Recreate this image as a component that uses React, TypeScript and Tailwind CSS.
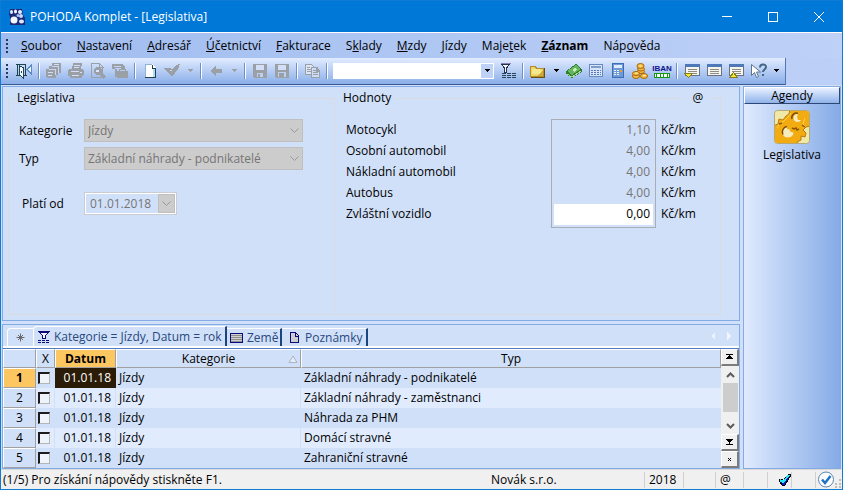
import React, { useState } from "react";

type IconProps = { children: React.ReactNode; w?: number; h?: number };

function Pic({ children, w = 16, h = 16 }: IconProps) {
  return (
    <svg width={w} height={h} viewBox={`0 0 ${w} ${h}`} shapeRendering="crispEdges" aria-hidden="true" className="shrink-0">
      {children}
    </svg>
  );
}

const GRAY = "#9b9fa6";

const DoorIcon = () => (
  <Pic>
    <path d="M0 1.500h10M1.500 1v12M9.500 1v12M0 12.500h4M8 12.500h3" fill="none" stroke="#1d4450" />
    <path d="M3 2.500l4 2v10l-4-3z" fill="#f4faff" stroke="#1d4450" />
    <path d="M5 8h1v2H5z" fill="#1d4450" />
    <path d="M11 6.500l4-4v8z" fill="#e8f4ff" stroke="#5b8cc4" />
  </Pic>
);
const PagesIcon = () => (
  <Pic>
    <path d="M6 0h9v10h-3v2h-2v3H1l-1-1V6h3V3h3z" fill={GRAY} />
    <path d="M3 6.500h6.500V12M6 3.500h6.500V10" fill="none" stroke="#c8d8f4" />
    <path d="M2 9.500h5M2 12.500h4M8 1.500h5" stroke="#d4e0f8" />
  </Pic>
);
const PrintIcon = () => (
  <Pic>
    <path d="M5 0h9l-1 6H4zM1 6h13l2 2v4l-2 1v2H2v-2H0V8z" fill={GRAY} />
    <path d="M6 2.500h6M6 4.500h5M3 8.500h8M4 12.500h7" stroke="#d4e0f8" />
    <path d="M12 9h2v1h-2z" fill="#d4e0f8" />
  </Pic>
);
const PreviewIcon = () => (
  <Pic>
    <path d="M1.500.500h8l3 3V14.500h-11z" fill="none" stroke={GRAY} />
    <path d="M9.500 1v3h4" fill="none" stroke={GRAY} />
    <circle cx="8" cy="8" r="4" fill={GRAY} />
    <path d="M10 10l5 5" stroke={GRAY} strokeWidth="3" />
    <path d="M6 7h3v2H6z" fill="#dbe6fa" />
  </Pic>
);
const PrintBoxIcon = () => (
  <Pic>
    <path d="M0 1h11l2 3v3H9V5H3v1H0z" fill={GRAY} />
    <path d="M3 6h2v8H3z" fill={GRAY} />
    <path d="M5 8h11v7H5z" fill={GRAY} />
    <path d="M7 8V6.500h6V8" fill="none" stroke={GRAY} />
    <path d="M2 3.500h7" fill="none" stroke="#c4d4f2" />
  </Pic>
);
const NewIcon = () => (
  <Pic>
    <path d="M3 1h7l4 4v10H3z" fill="#fff" />
    <path d="M3 1.500h7M3.500 1v13" stroke="#8fb2d9" fill="none" />
    <path d="M10 2v3h3.500v9.500H3" stroke="#1d4450" fill="none" />
    <path d="M11 6h2v8h-2z" fill="#b4dcf0" />
  </Pic>
);
const StampIcon = () => (
  <Pic>
    <path d="M0 5h6l2 1 4-4 4-1-2 5-6 8z" fill={GRAY} />
    <path d="M6 7.500h2" stroke="#c8d8f4" />
  </Pic>
);
const BackIcon = () => (
  <Pic>
    <path d="M2 8l6-5v3h6v4H8v3z" fill={GRAY} />
  </Pic>
);
const DiskIcon = () => (
  <Pic>
    <path d="M1 1h14v14H2l-1-1z" fill={GRAY} />
    <path d="M4 2h8v5H4z" fill="#d2dff7" />
    <path d="M5 10h6v4H5z" fill="#bcd0f2" />
    <path d="M6 11h2v3H6z" fill={GRAY} />
  </Pic>
);
const DiskOutIcon = () => (
  <Pic>
    <path d="M1 1h14v14H2l-1-1z" fill={GRAY} />
    <path d="M4 2h8v5H4z" fill="#d2dff7" />
    <path d="M4 9h8v5H4z" fill="#bcd0f2" />
    <path d="M5 10h5v5H5z" fill={GRAY} />
  </Pic>
);
const CopyIcon = () => (
  <Pic>
    <path d="M1.500 1.500h6l2 2v8h-8z" fill="#dbe5f7" stroke={GRAY} />
    <path d="M3 4.500h3M3 6.500h5M3 8.500h5" stroke={GRAY} />
    <path d="M7.500 4.500h5l3 3v7h-8z" fill="#cddcf5" stroke={GRAY} />
    <path d="M12 4h1v3h3v1h-4zM9 7.500h3M9 9.500h5M9 11.500h5" fill={GRAY} stroke={GRAY} />
  </Pic>
);
const FilterListIcon = () => (
  <Pic>
    <path d="M1.500 1.500h8L6.500 5v4h-2V5z" fill="#f4f8ff" stroke="#27324e" />
    <path d="M1 .5h10" stroke="#8a7fb5" />
    <path d="M2 10.500h14M2 12.500h14M2 14.500h14" stroke="#27445a" strokeDasharray="4 1" />
  </Pic>
);
const FolderIcon = () => (
  <Pic>
    <path d="M.5 3.500h5l1 2h7v8H.5z" fill="#ecd766" stroke="#b08e30" />
    <path d="M2 6h9v5H2z" fill="#f5e88c" />
    <path d="M14.500 5v9.500H1" fill="none" stroke="#6d4e12" />
    <path d="M7 13l6-6v6z" fill="#d0aa3c" />
  </Pic>
);
const MoneyIcon = () => (
  <Pic>
    <path d="M0 8l10-7 6 5v3L6 15l-6-4z" fill="#2e7d32" />
    <path d="M1 8l9-6 5 4-9 6z" fill="#67b55e" />
    <path d="M6 7l3-2 2 2-3 2z" fill="#c6efb8" />
    <path d="M1 11l5 3 9-6" fill="none" stroke="#a4dc98" />
  </Pic>
);
const CalcWideIcon = () => (
  <Pic>
    <rect x="1.500" y="1.500" width="13" height="12" fill="#d6e3f8" stroke="#6789bd" />
    <path d="M3 3h10v2H3z" fill="#7f9dcb" />
    <path d="M3 7.500h10M3 9.500h10M3 11.500h10" stroke="#5579b5" strokeDasharray="2 1" />
  </Pic>
);
const CalcIcon = () => (
  <Pic>
    <rect x="2.500" y=".5" width="11" height="14" fill="#6e9bd8" stroke="#3c6eb4" />
    <path d="M4 2h8v3H4z" fill="#e0ecfb" />
    <path d="M4 7.500h6M4 9.500h6M4 11.500h6" stroke="#f2f6fd" strokeDasharray="2 1" />
    <path d="M10 7.500h2" stroke="#f09a32" strokeWidth="2" />
  </Pic>
);
const CoinsIcon = () => (
  <svg width="16" height="16" viewBox="0 0 16 16" aria-hidden="true">
    <g fill="#f6bd42" stroke="#a86508">
      <ellipse cx="9" cy="8.500" rx="3.500" ry="2" />
      <ellipse cx="9" cy="6" rx="3.500" ry="2" />
      <ellipse cx="8.500" cy="3" rx="3.500" ry="2.500" />
      <ellipse cx="4" cy="13" rx="3.500" ry="2.500" />
      <ellipse cx="4" cy="10.500" rx="3.500" ry="2" />
      <ellipse cx="12" cy="13" rx="3.500" ry="2.500" />
    </g>
    <path d="M7 3h3M3 10h3M11 12.500h3" stroke="#fff0a8" />
  </svg>
);
const WindowIcon = ({ mark }: { mark?: "down" | "up" }) => (
  <Pic>
    <rect x="1.500" y="1.500" width="14" height="11" fill="#f5f5ee" stroke="#6a7282" />
    <path d="M1 1h15v3H1z" fill="#4f78b8" />
    <path d="M4 6.500h9M4 8.500h9M4 10.500h9" stroke="#8c8c84" />
    {mark === "down" && <path d="M.5 10.500h8l-4 4z" fill="#f5e632" stroke="#857d20" />}
    {mark === "up" && <path d="M1.500 14.500h8l-4-5z" fill="#f5e632" stroke="#857d20" />}
  </Pic>
);
const HelpIcon = () => (
  <svg width="17" height="16" viewBox="0 0 17 16" aria-hidden="true">
    <path d="M1.500 1.500v11l3-3 2 5 2-1-2-4.500h4z" fill="#fff" stroke="#5f7690" />
    <path d="M10 4.500c0-4 6-4 6-.5 0 2.500-3 2.500-3 5M13 11v2" fill="none" stroke="#456685" strokeWidth="2" />
  </svg>
);
const Caret = ({ color = "#000" }: { color?: string }) => (
  <Pic w={7} h={4}>
    <path d="M1 0h5v1H1zM2 1h3v1H2zM3 2h1v1H3z" fill={color} />
  </Pic>
);

const FunnelIcon = () => (
  <Pic w={12} h={12}>
    <path d="M1.500 1.500h9L7.500 4.500v3h-3v-3z" fill="#f4f8ff" stroke="#0b0b7c" />
    <path d="M0 .5h12" stroke="#0b0b7c" />
    <path d="M0 9.500h12M0 11.500h12" stroke="#0b0b7c" strokeDasharray="3 1" />
  </Pic>
);
const GridIcon = () => (
  <Pic w={13} h={10}>
    <rect x="0.500" y="0.500" width="12" height="9" fill="#d0d0d0" stroke="#0b0b7c" />
    <path d="M1 2.500h11M1 4.500h11M1 6.500h11M1 8.500h11" stroke="#8d8d8d" />
  </Pic>
);
const NoteIcon = () => (
  <Pic w={10} h={12}>
    <path d="M.5 .5h5l3 3v7h-8z" fill="#cfcfcf" stroke="#0b0b7c" />
    <path d="M5.500 1v3h3" fill="none" stroke="#0b0b7c" />
  </Pic>
);

function AppLogo() {
  return (
    <svg width="16" height="16" viewBox="0 0 16 16" aria-hidden="true">
      <path d="M1 0h12l1 6 2 3v7H1V9L0 5z" fill="#1c2a78" />
      <ellipse cx="2.500" cy="3" rx="1.500" ry="2" fill="#e4ecfb" />
      <ellipse cx="6.500" cy="2.500" rx="1.500" ry="2" fill="#f2f6ff" />
      <ellipse cx="11" cy="3" rx="2" ry="2" fill="#e4ecfb" />
      <ellipse cx="5" cy="11" rx="3.500" ry="3.500" fill="#f2f8ff" />
      <circle cx="12" cy="7" r="2" fill="#c9d9f8" />
      <circle cx="9" cy="6.500" r="1.500" fill="#a9c0f0" />
      <ellipse cx="12.500" cy="12.500" rx="2.500" ry="2" fill="#dce8fc" />
    </svg>
  );
}

function GearsPicture() {
  return (
    <svg width="36" height="34" viewBox="0 0 36 34" aria-hidden="true">
      <defs>
        <clipPath id="tile">
          <rect x="1" y="1" width="34" height="32" rx="2" />
        </clipPath>
      </defs>
      <rect x="0.500" y="0.500" width="35" height="33" rx="3" fill="#f0e8a8" stroke="#b5a878" />
      <g clipPath="url(#tile)">
        <path
          d="M16 -1l-1 5-3 2-3 4-4-1-1 5-5 2v20h25l-1-4 4-2v-4l4 1 1-4-3-3 3-3 4-1V-1z"
          fill="#f2ac12"
          stroke="#b87a0a"
          strokeLinejoin="round"
        />
        <path d="M17 3l-3 4-4 4-4 2-3 5M31 8l-2 6 3 3" fill="none" stroke="#ffcf4a" />
        <path d="M13 16.500a5.500 5.500 0 1 0 6.500 6l-3-.5-1-2.500-2.500-.5z" fill="#f4ecbc" />
        <path d="M9 24.500a5.500 5.500 0 0 1 4-8" fill="none" stroke="#7d4c04" strokeWidth="1.500" />
        <path d="M24 4a4 4 0 1 0 3 6l-3 0-1-3z" fill="#f4ecbc" />
        <path d="M18 9a4.500 4.500 0 0 1 6-5.500" fill="none" stroke="#7d4c04" strokeWidth="1.500" />
        <path d="M18 18l2 1 2-1 1 2 2-1M28 15l3 2M5 14l3-1" fill="none" stroke="#8b5706" strokeWidth="1.500" />
      </g>
    </svg>
  );
}

function Sep() {
  return (
    <span className="flex h-4 w-2 shrink-0 justify-center">
      <span className="w-px bg-[#6e8fc8]" />
      <span className="w-px bg-white" />
    </span>
  );
}

function Tool({ label, disabled, children }: { label: string; disabled?: boolean; children: React.ReactNode }) {
  return (
    <button type="button" aria-label={label} disabled={disabled} className="flex h-6 w-[22px] shrink-0 items-center justify-center">
      {children}
    </button>
  );
}

function Drop({ label, disabled }: { label: string; disabled?: boolean }) {
  return (
    <button type="button" aria-label={label} disabled={disabled} className="flex h-6 w-3.5 shrink-0 items-center justify-center">
      <Caret color={disabled ? GRAY : "#000"} />
    </button>
  );
}

function Grip() {
  return (
    <span className="flex w-3 shrink-0 flex-col items-center gap-0.5">
      {[0, 1, 2, 3].map((i) => (
        <span key={i} className="size-0.5 bg-[#26375c]" />
      ))}
    </span>
  );
}

const menu: [string, string, string][] = [
  ["", "S", "oubor"],
  ["", "N", "astavení"],
  ["", "A", "dresář"],
  ["", "Ú", "četnictví"],
  ["", "F", "akturace"],
  ["S", "k", "lady"],
  ["", "M", "zdy"],
  ["", "J", "ízdy"],
  ["Maje", "t", "ek"],
  ["", "Z", "áznam"],
  ["Náp", "o", "věda"],
];

function Toolbar() {
  return (
    <div className="flex">
      <div className="flex h-[27px] items-center border-r border-b border-r-[#5576ae] border-b-[#3b5a92] bg-linear-to-b from-[#e2ecff] to-[#8aaee8] pr-0.5">
        <Grip />
        <Tool label="Zavřít agendu"><DoorIcon /></Tool>
        <Sep />
        <Tool label="Tiskové sestavy" disabled><PagesIcon /></Tool>
        <Tool label="Tisk" disabled><PrintIcon /></Tool>
        <Tool label="Náhled" disabled><PreviewIcon /></Tool>
        <Tool label="Export" disabled><PrintBoxIcon /></Tool>
        <Sep />
        <Tool label="Nový"><NewIcon /></Tool>
        <Tool label="Označit" disabled><StampIcon /></Tool>
        <Drop label="Možnosti označení" disabled />
        <Sep />
        <Tool label="Zpět" disabled><BackIcon /></Tool>
        <Drop label="Historie" disabled />
        <Sep />
        <Tool label="Uložit" disabled><DiskIcon /></Tool>
        <Tool label="Uložit a zavřít" disabled><DiskOutIcon /></Tool>
        <Sep />
        <Tool label="Kopírovat" disabled><CopyIcon /></Tool>
        <Sep />
        <div className="mr-[3px] ml-0.5 flex h-4 w-[161px] bg-white">
          <input aria-label="Hledat" className="min-w-0 flex-1 bg-white px-1 outline-none" />
          <button type="button" aria-label="Rozbalit hledání" className="my-px mr-px flex w-3 items-center justify-center bg-[#bdd2f6]">
            <Caret />
          </button>
        </div>
        <Tool label="Filtr"><FilterListIcon /></Tool>
        <Sep />
        <Tool label="Složka"><FolderIcon /></Tool>
        <Drop label="Možnosti složky" />
        <Tool label="Platby"><MoneyIcon /></Tool>
        <Tool label="Kalkulačka"><CalcWideIcon /></Tool>
        <Tool label="Výpočet"><CalcIcon /></Tool>
        <Tool label="Měny"><CoinsIcon /></Tool>
        <button type="button" className="flex h-6 w-[22px] shrink-0 flex-col items-center justify-center">
          <span className="font-['Liberation_Sans',sans-serif] text-[8px] leading-[9px] font-bold text-[#14148c]">IBAN</span>
          <span className="flex h-[5px] w-4 items-center justify-around border border-[#129912] bg-white">
            {[0, 1, 2, 3].map((i) => (
              <span key={i} className="h-full w-px bg-[#129912]" />
            ))}
          </span>
        </button>
        <Sep />
        <Tool label="Dolní panel"><WindowIcon mark="down" /></Tool>
        <Tool label="Panel"><WindowIcon /></Tool>
        <Tool label="Horní panel"><WindowIcon mark="up" /></Tool>
        <Tool label="Nápověda"><HelpIcon /></Tool>
        <Drop label="Možnosti nápovědy" />
      </div>
    </div>
  );
}

function Chevron() {
  return (
    <svg width="9" height="6" viewBox="0 0 9 6" fill="none" stroke="#9a9a9a" aria-hidden="true">
      <path d="M0.500 0.500l4 4 4-4" />
    </svg>
  );
}

function DisabledSelect({ id, value }: { id: string; value: string }) {
  return (
    <div className="relative w-[219px]">
      <select id={id} disabled className="block h-[23px] w-full appearance-none border border-[#bfbfbf] bg-[#cccccc] pl-[3px] text-[#757575] opacity-100">
        <option>{value}</option>
      </select>
      <span className="pointer-events-none absolute inset-y-0 right-1 flex items-center">
        <Chevron />
      </span>
    </div>
  );
}

const rates = [
  { id: "motocykl", label: "Motocykl", value: "1,10" },
  { id: "osobni", label: "Osobní automobil", value: "4,00" },
  { id: "nakladni", label: "Nákladní automobil", value: "4,00" },
  { id: "autobus", label: "Autobus", value: "4,00" },
  { id: "zvlastni", label: "Zvláštní vozidlo", value: "0,00" },
];

function DetailForm() {
  return (
    <form className="flex min-h-[235px] border border-[#84abe3] bg-[#d1e0f9] pt-[3px] pr-[18px] pb-[5px] pl-[5px]">
      <fieldset className="w-[326px] shrink-0 border-t border-b border-l border-[#dadbdf] pl-2.5">
        <legend className="-ml-1 px-0.5 leading-4">Legislativa</legend>
        <div className="flex flex-col gap-[5px] pt-[13px]">
          <div className="flex items-center">
            <label htmlFor="kategorie" className="w-[65px]">Kategorie</label>
            <DisabledSelect id="kategorie" value="Jízdy" />
          </div>
          <div className="flex items-center">
            <label htmlFor="typ" className="w-[65px]">Typ</label>
            <DisabledSelect id="typ" value="Základní náhrady - podnikatelé" />
          </div>
          <div className="flex items-center pt-[17px]">
            <label htmlFor="plati" className="w-[65px] pl-[3px]">Platí od</label>
            <div className="flex h-[23px] w-[93px] border border-[#c9ccd2] bg-white p-px">
              <input id="plati" disabled defaultValue="01.01.2018" className="min-w-0 flex-1 bg-[#d1e0f9] pl-1 text-[#757575]" />
              <button type="button" disabled aria-label="Kalendář" className="flex w-[17px] items-center justify-center border border-[#bfbfbf] bg-[#cccccc]">
                <Chevron />
              </button>
            </div>
          </div>
        </div>
      </fieldset>
      <fieldset className="min-w-0 flex-1 border-r border-b border-l border-[#dadbdf]">
        <legend className="flex w-full items-center leading-4">
          <span className="pl-2">Hodnoty</span>
          <span className="mx-1 h-px flex-1 bg-[#dadbdf]" />
          <span className="w-6 text-center">@</span>
          <span className="ml-px h-px w-[9px] bg-[#dadbdf]" />
        </legend>
        <div className="flex justify-between pt-[13px] pr-6 pl-[11px]">
          <div className="flex flex-col">
            {rates.map((r) => (
              <label key={r.id} htmlFor={r.id} className="h-[21px] leading-[21px]">{r.label}</label>
            ))}
          </div>
          <div className="flex">
            <div className="flex w-[105px] flex-col border border-[#a9adb5] px-0.5 pb-0.5">
              {rates.map((r, i) => (
                <input
                  key={r.id}
                  id={r.id}
                  defaultValue={r.value}
                  disabled={i < 4}
                  className="h-[21px] w-full bg-white pr-[3px] pb-0.5 text-right outline-none disabled:bg-transparent disabled:text-[#757575]"
                />
              ))}
            </div>
            <div className="flex w-10 flex-col pl-[5px]">
              {rates.map((r) => (
                <span key={r.id} className="h-[21px] leading-[21px]">Kč/km</span>
              ))}
            </div>
          </div>
        </div>
      </fieldset>
    </form>
  );
}

const records = [
  "Základní náhrady - podnikatelé",
  "Základní náhrady - zaměstnanci",
  "Náhrada za PHM",
  "Domácí stravné",
  "Zahraniční stravné",
];

function RecordTable() {
  const [checked, setChecked] = useState<Record<number, boolean>>({});
  const head = "h-[19px] border-t border-l border-r border-b border-t-white border-l-white border-r-[#a0a0a0] border-b-[#a0a0a0] p-0 font-normal leading-4";
  return (
    <table className="min-w-0 flex-1 table-fixed border-separate border-spacing-0 leading-4">
      <colgroup>
        <col className="w-[33px]" />
        <col className="w-[19px]" />
        <col className="w-[61px]" />
        <col className="w-[185px]" />
        <col />
      </colgroup>
      <thead>
        <tr>
          <th className={head} aria-label="Číslo" />
          <th className={head}>X</th>
          <th className={`${head} bg-[#fcc761]`}><b>Datum</b></th>
          <th className={head}>
            <span className="flex items-center">
              <span className="flex-1 pl-3 text-center">Kategorie</span>
              <svg width="10" height="8" viewBox="0 0 10 8" className="mr-0.5" aria-hidden="true">
                <path d="M1 7.500L5 1l4 6.500z" fill="#e4edfc" stroke="#aab2c0" />
              </svg>
            </span>
          </th>
          <th className={head}>Typ</th>
        </tr>
      </thead>
      <tbody>
        {records.map((name, i) => (
          <tr key={name} className={i % 2 ? "bg-[#e0ebfe]" : "bg-[#d1e0f9]"}>
            <th
              scope="row"
              className={
                i === 0
                  ? "h-5 border-t border-r border-b border-l border-t-white border-r-[#a0a0a0] border-b-[#a0a0a0] border-l-white bg-[#fcc761] p-0 font-bold"
                  : "h-5 border-t border-r border-b border-l border-t-white border-r-[#a0a0a0] border-b-[#a0a0a0] border-l-white bg-[#d1e0f9] p-0 font-normal"
              }
            >
              {i + 1}
            </th>
            <td className="border-r border-[#d1e0f9] p-0 pl-0.5">
              <input
                type="checkbox"
                aria-label={`Označit záznam ${i + 1}`}
                checked={!!checked[i]}
                onChange={() => setChecked({ ...checked, [i]: !checked[i] })}
                className="block size-3 appearance-none border-t-2 border-r border-b border-l-2 border-t-[#1c1c1c] border-r-[#b5b5b5] border-b-[#b5b5b5] border-l-[#1c1c1c] bg-[#eef3fc] checked:bg-[#26375c]"
              />
            </td>
            <td className={i === 0 ? "bg-[#2a1c06] p-0 pr-[5px] text-right text-white" : "border-r border-[#d1e0f9] p-0 pr-1 text-right"}>
              01.01.18
            </td>
            <td className="border-r border-[#d1e0f9] p-0 pl-[3px]">Jízdy</td>
            <td className="p-0 pl-[3px]">{name}</td>
          </tr>
        ))}
      </tbody>
    </table>
  );
}

function EdgeButton({ label, children }: { label: string; children: React.ReactNode }) {
  return (
    <button
      type="button"
      aria-label={label}
      className="flex h-[17px] w-full shrink-0 items-center justify-center border-t border-r-2 border-b-2 border-l border-t-white border-r-[#7c7c7c] border-b-[#7c7c7c] border-l-white bg-[#f0f0f0]"
    >
      {children}
    </button>
  );
}

function ScrollColumn() {
  return (
    <div className="flex w-[18px] flex-col bg-[#f0f0f0]">
      <EdgeButton label="První záznam">
        <Pic w={7} h={6}><path d="M0 0h7v1H0zM3 1h1v1H3zM2 2h3v1H2zM1 3h5v1H1zM0 4h7v1H0z" /></Pic>
      </EdgeButton>
      <button type="button" aria-label="Nahoru" className="flex h-[17px] shrink-0 items-center justify-center">
        <svg width="9" height="6" viewBox="0 0 9 6" fill="none" stroke="#5b5b5b" strokeWidth="2"><path d="M1 5l3.500-3.500L8 5" /></svg>
      </button>
      <div className="h-[29px] w-[15px] shrink-0 self-center bg-[#cdcdcd]" />
      <div className="flex-1" />
      <button type="button" aria-label="Dolů" className="flex h-[17px] shrink-0 items-center justify-center">
        <svg width="9" height="6" viewBox="0 0 9 6" fill="none" stroke="#5b5b5b" strokeWidth="2"><path d="M1 1l3.500 3.500L8 1" /></svg>
      </button>
      <EdgeButton label="Poslední záznam">
        <Pic w={7} h={6}><path d="M0 5h7v1H0zM0 0h7v1H0zM1 1h5v1H1zM2 2h3v1H2zM3 3h1v2H3z" /></Pic>
      </EdgeButton>
      <EdgeButton label="Zrušit výběr">
        <Pic w={3} h={3}><path d="M0 0h1v1H0zM2 0h1v1H2zM1 1h1v1H1zM0 2h1v1H0zM2 2h1v1H2z" /></Pic>
      </EdgeButton>
    </div>
  );
}

function RecordPanel() {
  return (
    <section className="flex flex-1 flex-col border border-[#84abe3] bg-[#d1e0f9]">
      <div className="flex items-end border-b border-[#4f7cc4]">
        <div role="tablist" className="flex flex-1 items-end border-b-2 border-white pl-1 text-[#28487e]">
          <button role="tab" type="button" aria-selected="false" aria-label="Všechny záznamy" className="flex h-[18px] w-[26px] items-center justify-center rounded-tl-sm border-t border-l border-white">
            <svg width="9" height="9" viewBox="0 0 9 9" stroke="#6a6a6a" aria-hidden="true">
              <path d="M4.500 0.500v8M0.500 4.500h8M2 2l5 5M7 2L2 7" />
            </svg>
          </button>
          <button role="tab" type="button" aria-selected="true" className="flex h-5 w-[194px] items-center gap-1 rounded-tl-sm border-t border-r-2 border-l border-t-white border-r-[#1c447f] border-l-white pl-1 whitespace-nowrap">
            <FunnelIcon />
            Kategorie = Jízdy, Datum = rok
          </button>
          <button role="tab" type="button" aria-selected="false" className="flex h-[18px] w-[55px] items-center gap-1 border-t border-r-2 border-t-white border-r-[#1c447f] pl-[3px]">
            <GridIcon />
            Země
          </button>
          <button role="tab" type="button" aria-selected="false" className="flex h-[18px] w-[86px] items-center gap-[5px] border-t border-r-2 border-t-white border-r-[#1c447f] pl-2">
            <NoteIcon />
            Poznámky
          </button>
          <span className="flex h-[21px] flex-1 items-center justify-end gap-3 pr-2">
            <Pic w={4} h={8}><path d="M4 0v8L0 4z" fill="#f0f4fc" /></Pic>
            <Pic w={4} h={8}><path d="M0 0v8l4-4z" fill="#f0f4fc" /></Pic>
          </span>
        </div>
      </div>
      <div className="flex flex-1 items-stretch">
        <RecordTable />
        <ScrollColumn />
      </div>
    </section>
  );
}

function Sidebar() {
  return (
    <aside className="flex w-[98px] shrink-0 flex-col border border-[#84abe3] bg-linear-to-r from-[#e0eafe] to-[#85abe6]">
      <h2 className="h-[17px] border-t border-r border-b border-l border-t-white border-r-[#2d4673] border-b-[#2d4673] border-l-white bg-linear-to-b from-[#eaf1ff] to-[#8fb2ea] text-center leading-[15px]">
        Agendy
      </h2>
      <button type="button" className="flex flex-col items-center gap-[3px] pt-1.5">
        <GearsPicture />
        <span className="leading-4">Legislativa</span>
      </button>
    </aside>
  );
}

function StatusBar() {
  const cell = "flex h-4 shrink-0 items-center border-l border-[#cfcfcf]";
  return (
    <footer className="flex h-5 items-center border-t border-[#d9d9d9] bg-[#f0f0f0] pl-0.5 leading-4">
      <span className="flex-1">(1/5) Pro získání nápovědy stiskněte F1.</span>
      <span className="w-[153px]">Novák s.r.o.</span>
      <span className={`${cell} w-[39px] pl-1`}>2018</span>
      <span className={`${cell} w-8`} />
      <span className={`${cell} w-7 pl-1`}>@</span>
      <span className={`${cell} w-6`} />
      <span className={`${cell} w-6 justify-end`}>
        <Pic w={13} h={13}>
          <path d="M1 7l3-1 1 2 6-7 2 1-6 10H4z" fill="#1616c0" stroke="#000" />
          <path d="M2 7l3 2 6-7" fill="none" stroke="#22e6f2" strokeWidth="2" />
        </Pic>
      </span>
      <span className={`${cell} w-6`} />
      <span className={`${cell} w-[27px]`}>
        <svg width="26" height="17" viewBox="0 0 26 17" aria-hidden="true">
          <circle cx="10" cy="8.500" r="7.500" fill="#fdfeff" stroke="#5b86ae" />
          <path d="M6 8.500l3 3.500 5.500-7" fill="none" stroke="#1f73c4" strokeWidth="2.500" />
          <path d="M23 8h2v2h-2zM23 12h2v2h-2zM19 12h2v2h-2zM23 15h2v2h-2zM19 15h2v2h-2z" fill="#bdbdbd" />
        </svg>
      </span>
    </footer>
  );
}

export default function App() {
  return (
    <div className="flex min-h-screen flex-col border border-[#0f7bd4] bg-[#bccff6] font-['Open_Sans','Noto_Sans',sans-serif] text-[12px] leading-4 text-black">
      <header className="flex h-[31px] items-center bg-[#0078d7] pl-2 text-white">
        <AppLogo />
        <h1 className="flex-1 pl-[5px] text-[12px]">POHODA Komplet - [Legislativa]</h1>
        <button type="button" aria-label="Minimalizovat" className="flex h-full w-[46px] items-center justify-center">
          <Pic w={10} h={10}><path d="M0 4h10v1H0z" fill="#fff" /></Pic>
        </button>
        <button type="button" aria-label="Maximalizovat" className="flex h-full w-[46px] items-center justify-center">
          <Pic w={10} h={10}><path d="M.5.5h9v9h-9z" fill="none" stroke="#fff" /></Pic>
        </button>
        <button type="button" aria-label="Zavřít" className="flex h-full w-[46px] items-center justify-center">
          <svg width="10" height="10" viewBox="0 0 10 10" stroke="#fff"><path d="M0 0l10 10M10 0L0 10" /></svg>
        </button>
      </header>
      <nav className="flex h-[26px] items-center gap-[15px] border-t border-white bg-linear-to-r from-[#9fbcef] to-[#bed1f7] whitespace-nowrap">
        <span className="-mr-[7px]">
          <Grip />
        </span>
        {menu.map(([a, key, b]) => (
          <button key={a + key + b} type="button" className={key === "Z" ? "font-bold" : ""}>
            {a}
            <span className="underline">{key}</span>
            {b}
          </button>
        ))}
      </nav>
      <Toolbar />
      <main className="flex flex-1 gap-[3px] bg-[#d1e0f9] px-px pt-px">
        <div className="flex min-w-0 flex-1 flex-col gap-[3px]">
          <DetailForm />
          <RecordPanel />
        </div>
        <Sidebar />
      </main>
      <StatusBar />
    </div>
  );
}
